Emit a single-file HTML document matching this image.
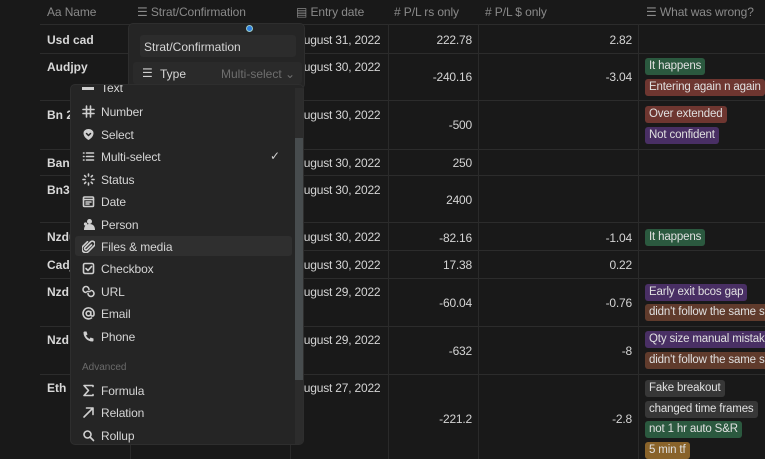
<!DOCTYPE html>
<html><head><meta charset="utf-8"><style>
*{margin:0;padding:0;box-sizing:border-box}
body{width:765px;height:459px;background:#191919;font-family:"Liberation Sans",sans-serif;color:#d4d4d4;font-size:12px;position:relative;overflow:hidden}
.a{position:absolute;white-space:nowrap}
.h{color:#8a8a8a;font-size:12px;top:5px;letter-spacing:-0.1px}
.hl{position:absolute;height:1px;background:#2c2c2c;left:40px;right:0}
.vl{position:absolute;width:1px;background:#2a2a2a;top:24px;bottom:0}
.nm{font-weight:bold;color:#d8d8d8;left:47px}
.dt{left:296px;letter-spacing:-0.2px}
.num{text-align:right;letter-spacing:-0.2px}
.tag{position:absolute;left:645px;height:17px;line-height:17px;padding:0 4px;border-radius:3px;font-size:11.5px;letter-spacing:-0.15px;color:#e0e0e0;white-space:nowrap}
.g{background:#2b593f}.r{background:#6e3630}.p{background:#492f64}.b{background:#603b2c}.gr{background:#373737}.y{background:#89632a}
.mi{position:absolute;left:101px;font-size:12px;color:#d5d5d5;letter-spacing:-0.1px}
svg.ic{position:absolute;left:82px;width:13px;height:13px;fill:none;stroke:#cfcfcf;stroke-width:1.6;stroke-linecap:round;stroke-linejoin:round}
</style></head><body>
<div class="a h" style="left:47px">Aa Name</div>
<div class="a h" style="left:137px">☰ Strat/Confirmation</div>
<div class="a h" style="left:296px">▤ Entry date</div>
<div class="a h" style="left:394px"># P/L rs only</div>
<div class="a h" style="left:485px"># P/L $ only</div>
<div class="a h" style="left:646px">☰ What was wrong?</div>

<div class="hl" style="top:24px"></div><div class="hl" style="top:53px"></div><div class="hl" style="top:100px"></div><div class="hl" style="top:149px"></div><div class="hl" style="top:175px"></div><div class="hl" style="top:222px"></div><div class="hl" style="top:250px"></div><div class="hl" style="top:278px"></div><div class="hl" style="top:326px"></div><div class="hl" style="top:374px"></div>
<div class="vl" style="left:130px"></div><div class="vl" style="left:290px"></div><div class="vl" style="left:388px"></div><div class="vl" style="left:478px"></div><div class="vl" style="left:638px"></div>

<div class="a nm" style="top:33px">Usd cad</div>
<div class="a nm" style="top:60px">Audjpy</div>
<div class="a nm" style="top:108px">Bn 2</div>
<div class="a nm" style="top:156px">Bank</div>
<div class="a nm" style="top:183px">Bn3</div>
<div class="a nm" style="top:230px">Nzdu</div>
<div class="a nm" style="top:258px">Cadjp</div>
<div class="a nm" style="top:285px">Nzd</div>
<div class="a nm" style="top:333px">Nzd</div>
<div class="a nm" style="top:381px">Eth u</div>

<div class="a dt" style="top:33px">August 31, 2022</div>
<div class="a dt" style="top:60px">August 30, 2022</div>
<div class="a dt" style="top:108px">August 30, 2022</div>
<div class="a dt" style="top:156px">August 30, 2022</div>
<div class="a dt" style="top:183px">August 30, 2022</div>
<div class="a dt" style="top:230px">August 30, 2022</div>
<div class="a dt" style="top:258px">August 30, 2022</div>
<div class="a dt" style="top:285px">August 29, 2022</div>
<div class="a dt" style="top:333px">August 29, 2022</div>
<div class="a dt" style="top:381px">August 27, 2022</div>

<div class="a num" style="right:293px;top:33px">222.78</div><div class="a num" style="right:133px;top:33px">2.82</div>
<div class="a num" style="right:293px;top:70px">-240.16</div><div class="a num" style="right:133px;top:70px">-3.04</div>
<div class="a num" style="right:293px;top:118px">-500</div>
<div class="a num" style="right:293px;top:156px">250</div>
<div class="a num" style="right:293px;top:193px">2400</div>
<div class="a num" style="right:293px;top:231px">-82.16</div><div class="a num" style="right:133px;top:231px">-1.04</div>
<div class="a num" style="right:293px;top:258px">17.38</div><div class="a num" style="right:133px;top:258px">0.22</div>
<div class="a num" style="right:293px;top:296px">-60.04</div><div class="a num" style="right:133px;top:296px">-0.76</div>
<div class="a num" style="right:293px;top:344px">-632</div><div class="a num" style="right:133px;top:344px">-8</div>
<div class="a num" style="right:293px;top:412px">-221.2</div><div class="a num" style="right:133px;top:412px">-2.8</div>

<div class="tag g" style="top:58px">It happens</div>
<div class="tag r" style="top:79px">Entering again n again</div>
<div class="tag r" style="top:106px">Over extended</div>
<div class="tag p" style="top:127px">Not confident</div>
<div class="tag g" style="top:229px">It happens</div>
<div class="tag p" style="top:284px">Early exit bcos gap</div>
<div class="tag b" style="top:304px">didn't follow the same s</div>
<div class="tag p" style="top:331px">Qty size manual mistake</div>
<div class="tag b" style="top:352px">didn't follow the same s</div>
<div class="tag gr" style="top:380px">Fake breakout</div>
<div class="tag gr" style="top:401px">changed time frames</div>
<div class="tag g" style="top:421px">not 1 hr auto S&amp;R</div>
<div class="tag y" style="top:442px">5 min tf</div>

<!-- strat panel -->
<div class="a" style="left:129px;top:24px;width:175px;height:64px;background:#252525;border-radius:4px;box-shadow:0 0 0 1px #2e2e2e"></div>
<div class="a" style="left:246px;top:25px;width:7px;height:7px;border-radius:50%;background:#2f80e0;border:1px solid #9cc"></div>
<div class="a" style="left:140px;top:35px;width:156px;height:22px;background:#2c2c2c;border-radius:3px;padding:5px 4px;color:#d6d6d6;font-size:12px">Strat/Confirmation</div>
<div class="a" style="left:133px;top:62px;width:169px;height:22px;background:#2a2a2a;border-radius:3px"></div>
<div class="a" style="left:142px;top:66px;color:#cfcfcf">☰</div>
<div class="a" style="left:160px;top:67px;color:#d6d6d6">Type</div>
<div class="a" style="left:221px;top:67px;color:#6e6e6e">Multi-select ⌄</div>

<!-- menu -->
<div class="a" style="left:71px;top:85px;width:232px;height:359px;background:#252525;border-radius:4px;box-shadow:0 0 0 1px #2e2e2e;overflow:hidden">
  <div class="a" style="left:224px;top:3px;width:8px;height:356px;background:#2c2c2c"></div>
  <div class="a" style="left:224px;top:53px;width:8px;height:242px;background:#474c4e"></div>
  <div class="a" style="left:4px;top:151px;width:217px;height:20px;background:#2f2f2f;border-radius:3px"></div>
  <div class="a" style="left:11px;top:2px;width:12px;height:3px;background:#cfcfcf"></div>
  <div class="a" style="left:30px;top:-4px;font-size:12px;color:#d5d5d5">Text</div>
</div>
<svg class="ic" style="top:105px" viewBox="0 0 13 13"><path d="M4.5 1v11M8.5 1v11M1 4.5h11M1 8.5h11"/></svg><div class="mi" style="top:105px">Number</div>
<svg class="ic" style="top:128px" viewBox="0 0 13 13"><path d="M6.5 12C3 10 1.5 7.5 1.5 5A5 4 0 0 1 11.5 5C11.5 7.5 10 10 6.5 12Z" fill="#cfcfcf" stroke="none"/><path d="M4.5 5.5l2 2 2-2" stroke="#252525" stroke-width="1.5"/></svg><div class="mi" style="top:128px">Select</div>
<svg class="ic" style="top:150px" viewBox="0 0 13 13"><path d="M1.5 3h0.5M1.5 6.5h0.5M1.5 10h0.5M4.5 3h7M4.5 6.5h7M4.5 10h7"/></svg><div class="mi" style="top:150px">Multi-select</div><div class="a" style="left:270px;top:149px;color:#cfcfcf">✓</div>
<svg class="ic" style="top:173px" viewBox="0 0 13 13" stroke-width="1.3"><path d="M6.5 1v2M6.5 10v2M1 6.5h2M10 6.5h2M2.6 2.6l1.2 1.2M9.2 9.2l1.2 1.2M2.6 10.4l1.2-1.2M9.2 3.8l1.2-1.2"/></svg><div class="mi" style="top:173px">Status</div>
<svg class="ic" style="top:195px" viewBox="0 0 13 13"><rect x="1.5" y="2" width="10" height="9.5" rx="1"/><path d="M1.5 4.5h10M4 7h5M4 9h3"/></svg><div class="mi" style="top:195px">Date</div>
<svg class="ic" style="top:218px" viewBox="0 0 13 13"><circle cx="7.5" cy="3.5" r="2.5" fill="#cfcfcf" stroke="none"/><path d="M2 12c0-4 2-6 5.5-6S13 8 13 12Z" fill="#cfcfcf" stroke="none"/><circle cx="3.5" cy="6" r="1.6" fill="#cfcfcf" stroke="none"/></svg><div class="mi" style="top:218px">Person</div>
<svg class="ic" style="top:240px" viewBox="0 0 13 13" stroke-width="1.4"><path d="M9.5 5L5 9.5a1.4 1.4 0 0 1-2-2l5.5-5.5a2.6 2.6 0 0 1 3.7 3.7L6.5 11.5a3.8 3.8 0 0 1-5.4-5.4L5.5 1.7"/></svg><div class="mi" style="top:240px">Files &amp; media</div>
<svg class="ic" style="top:262px" viewBox="0 0 13 13" stroke-width="1.4"><rect x="1.5" y="1.5" width="10" height="10" rx="1.5"/><path d="M4 6.5l2 2 3.5-4"/></svg><div class="mi" style="top:262px">Checkbox</div>
<svg class="ic" style="top:285px" viewBox="0 0 13 13" stroke-width="1.5"><path d="M7 4.5A3 3 0 1 0 4 7.5M6 8.5A3 3 0 1 0 9 5.5M5 6.5h3"/></svg><div class="mi" style="top:285px">URL</div>
<svg class="ic" style="top:307px" viewBox="0 0 13 13" stroke-width="1.4"><circle cx="6.5" cy="6.5" r="2.3"/><path d="M8.8 4.5v3a1.6 1.6 0 0 0 3.2 0V6.5A5.5 5.5 0 1 0 9.5 11"/></svg><div class="mi" style="top:307px">Email</div>
<svg class="ic" style="top:330px" viewBox="0 0 13 13"><path d="M2.5 1.5l2 0 1 3-1.5 1c0.8 1.6 1.8 2.6 3.5 3.5l1-1.5 3 1v2c0 .6-.5 1-1 1C5.5 11.5 1.5 7.5 1.5 2.5c0-.5.4-1 1-1Z" fill="#cfcfcf" stroke="none"/></svg><div class="mi" style="top:330px">Phone</div>
<div class="a" style="left:82px;top:362px;font-size:10px;color:#6a6a6a">Advanced</div>
<svg class="ic" style="top:384px" viewBox="0 0 13 13" stroke-width="1.8"><path d="M11 2.5V1.5H2l4.5 5L2 11.5h9v-1"/></svg><div class="mi" style="top:384px">Formula</div>
<svg class="ic" style="top:406px" viewBox="0 0 13 13" stroke-width="1.6"><path d="M2 11L11 2M4.5 2H11v6.5"/></svg><div class="mi" style="top:406px">Relation</div>
<svg class="ic" style="top:429px" viewBox="0 0 13 13" stroke-width="1.6"><circle cx="5.5" cy="5.5" r="3.5"/><path d="M8 8l3.5 3.5"/></svg><div class="mi" style="top:429px">Rollup</div>
</body></html>
